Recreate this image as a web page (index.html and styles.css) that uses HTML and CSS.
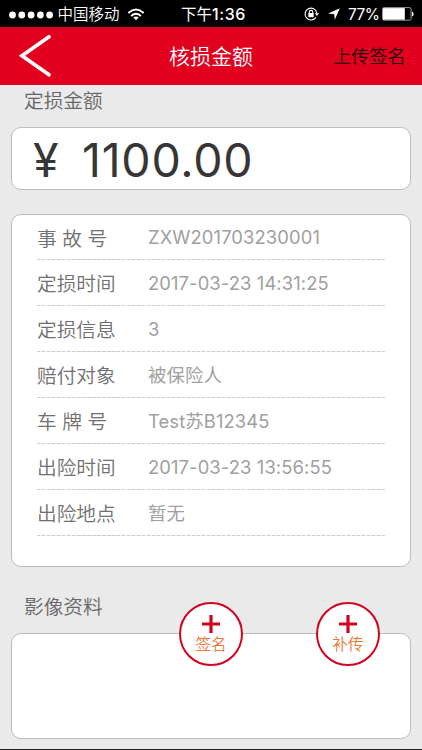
FILE: index.html
```html
<!DOCTYPE html>
<html lang="zh-CN">
<head>
<meta charset="utf-8">
<title>核损金额</title>
<link rel="stylesheet" href="styles.css">
</head>
<body>
<div class="screen">
  <div class="status">
    <div class="status-left">
      <svg class="signal" width="44" height="8" viewBox="0 0 44 8" fill="#fff"><circle cx="3.5" cy="4" r="3.4"/><circle cx="12.8" cy="4" r="3.4"/><circle cx="22.1" cy="4" r="3.4"/><circle cx="31.4" cy="4" r="3.4"/><circle cx="40.6" cy="4" r="3.4"/></svg>
      <span class="carrier">中国移动</span>
      <svg class="wifi" width="18" height="13" viewBox="0 0 18 13" fill="none" stroke="#fff" stroke-width="1.9"><path d="M1.3 5 Q9 -1.8 16.7 5"/><path d="M4.2 8 Q9 3.6 13.8 8"/><path d="M9 12.2 L6.3 9.5 Q9 7.3 11.7 9.5Z" fill="#fff" stroke="none"/></svg>
    </div>
    <span class="time">下午<b>1:36</b></span>
    <div class="status-right">
      <svg class="lock" width="15" height="14" viewBox="0 0 15 14" fill="none" stroke="#fff" stroke-width="1.1"><path d="M11.9 10.4 A5.9 5.9 0 1 1 12.8 6"/><path d="M10.8 6.2 H15 L12.9 9Z" fill="#fff" stroke="none"/><rect x="4.3" y="6" width="5.4" height="4.2" fill="#fff" stroke="none"/><path d="M5.3 6.5 V5 Q5.3 3.4 7 3.4 Q8.7 3.4 8.7 5 V6.5"/></svg>
      <svg class="nav" width="12" height="12" viewBox="0 0 12 12" fill="#fff"><path d="M11.8 .3 L6.8 11.7 L6.2 6.2 L.2 5.6Z"/></svg>
      <span class="percent">77%</span>
      <svg class="battery" width="32" height="14" viewBox="0 0 32 14"><rect x=".5" y=".6" width="28.6" height="12.6" rx="1.5" fill="none" stroke="#999"/><rect x="1" y="1.1" width="21.8" height="11.6" fill="#fff"/><path d="M30 4.5 Q31.6 5 31.6 7 Q31.6 9 30 9.5Z" fill="#fff"/></svg>
    </div>
  </div>
  <header class="header">
    <svg class="back" width="34" height="44" viewBox="0 0 34 44" fill="none" stroke="#fff" stroke-width="3.7" stroke-linecap="round" stroke-linejoin="miter"><path d="M31 2.7 L4 21.8 L31 40.7"/></svg>
    <h1 class="title">核损金额</h1>
    <span class="upload">上传签名</span>
  </header>
  <main class="content">
    <h2 class="heading">定损金额</h2>
    <section class="card amount"><span class="yen">¥</span><span class="figure">1100.00</span></section>
    <section class="card details">
      <div class="row"><span class="label">事 故 号</span><span class="value">ZXW201703230001</span></div>
      <div class="row"><span class="label">定损时间</span><span class="value">2017-03-23 14:31:25</span></div>
      <div class="row"><span class="label">定损信息</span><span class="value">3</span></div>
      <div class="row"><span class="label">赔付对象</span><span class="value">被保险人</span></div>
      <div class="row"><span class="label">车 牌 号</span><span class="value">Test苏B12345</span></div>
      <div class="row"><span class="label">出险时间</span><span class="value">2017-03-23 13:56:55</span></div>
      <div class="row"><span class="label">出险地点</span><span class="value">暂无</span></div>
    </section>
    <h2 class="heading images">影像资料</h2>
    <section class="card gallery">
      <div class="add sign"><svg width="18" height="18" viewBox="0 0 18 18" stroke="#d3021f" stroke-width="3.2"><path d="M0 9H18M9 0V18"/></svg><span>签名</span></div>
      <div class="add extra"><svg width="18" height="18" viewBox="0 0 18 18" stroke="#d3021f" stroke-width="3.2"><path d="M0 9H18M9 0V18"/></svg><span>补传</span></div>
    </section>
  </main>
</div>
</body>
</html>
```
FILE: styles.css
```css
* { box-sizing: border-box; }
body { margin: 0; font-family: Inter, "Noto Sans CJK SC", sans-serif; background: #eaeaea; }
.screen { width: 422px; height: 750px; overflow: hidden; display: flex; flex-direction: column; background: #eaeaea; border-bottom: 1px solid #222; }
.status { height: 27px; flex: none; background: #000; color: #fff; display: grid; grid-template-columns: 181px 1fr 119px; align-items: center; font-size: 15.5px; line-height: 27px; white-space: nowrap; }
.status-left, .status-right { display: flex; align-items: center; height: 27px; }
.status-left { padding-left: 9px; }
.signal { margin-top: 1px; }
.carrier { margin-left: 4.5px; width: 62px; padding-top: 1px; font-weight: 350; }
.wifi { margin-left: 7px; }
.time { padding-top: 1px; font-weight: 400; }
.time b { font-weight: 500; font-size: 16px; letter-spacing: 0.6px; }
.lock { margin-left: 1px; }
.nav { margin-left: 9px; }
.percent { margin-left: 8px; width: 30px; font-size: 15.5px; letter-spacing: -0.5px; }
.battery { margin-left: 4px; }
.header { height: 58px; flex: none; background: #e1001e; display: grid; grid-template-columns: 169px 1fr 89px; align-items: center; font-family: "Noto Sans CJK SC", sans-serif; }
.back { margin-left: 18px; }
.title { margin: 0; color: #fff; font-size: 21px; line-height: 28px; padding-bottom: 2px; font-weight: 350; }
.upload { font-size: 18.2px; line-height: 28px; padding-bottom: 2px; font-weight: 350; color: #260005; }
.content { padding: 0 11px; display: flex; flex-direction: column; }
.heading { margin: 0; padding-left: 13px; height: 42px; font-size: 19.7px; line-height: 33px; font-weight: 350; color: #666; }
.card { background: #fff; border: 1px solid #bcbcbc; border-radius: 10px; }
.amount { height: 63px; display: flex; align-items: center; padding: 2px 0 0 21px; color: #363636; font-size: 46.5px; line-height: 58px; }
.yen { width: 49px; }
.figure { letter-spacing: 0.75px; }
.details { margin-top: 24px; height: 353px; padding: 0 25px; }
.row { height: 46px; display: flex; align-items: center; padding-top: 2px; line-height: 30px; background: repeating-linear-gradient(90deg, #ccc 0 3.5px, #eee 3.5px 5px) bottom / 100% 1px no-repeat; }
.row:first-child { height: 45px; }
.label { width: 111px; font-size: 19.7px; font-weight: 350; color: #707070; }
.value { font-size: 18.4px; font-weight: 400; color: #a0a0a0; letter-spacing: 0.1px; padding-bottom: 3px; }
.images { height: 66px; line-height: 80px; }
.gallery { height: 106px; position: relative; }
.add { position: absolute; top: -32px; width: 64px; height: 64px; border: 2px solid #d3021f; border-radius: 50%; background: #fff; display: flex; flex-direction: column; align-items: center; padding-top: 11px; color: #ed7535; font-size: 15.5px; line-height: 24px; font-weight: 350; }
.add svg { flex: none; }
.sign { left: 167px; }
.extra { left: 304px; }
```
